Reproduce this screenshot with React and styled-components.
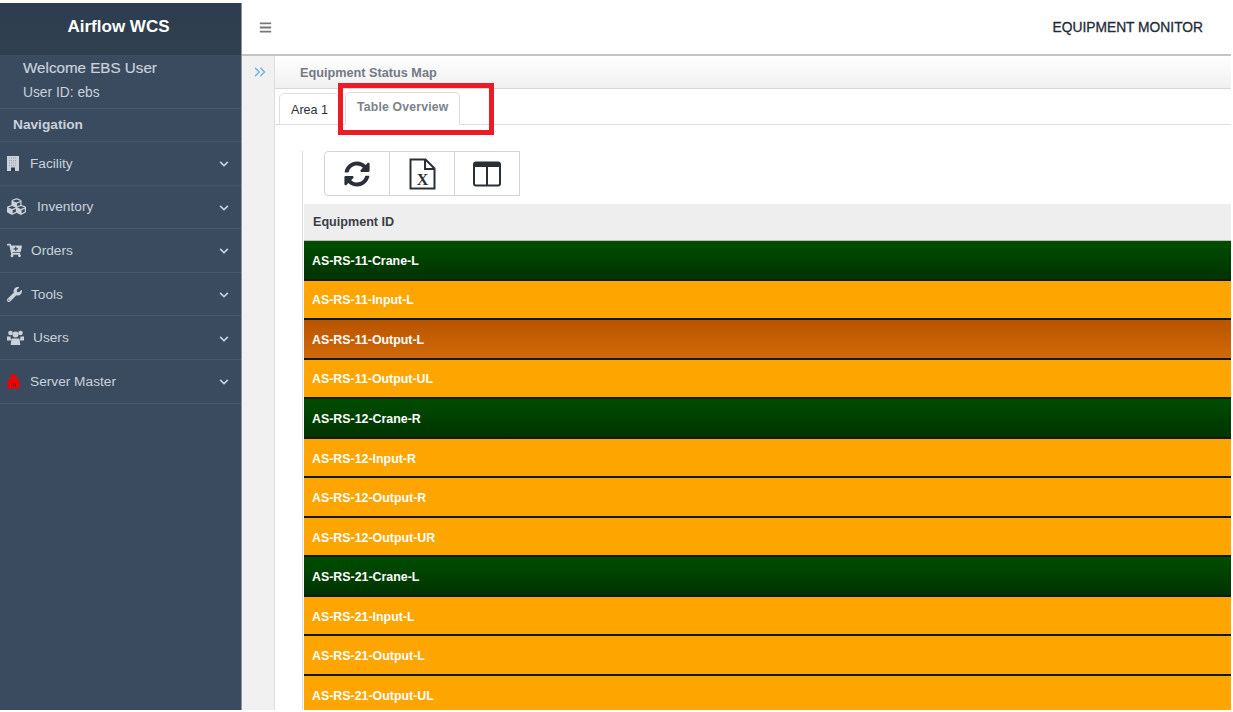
import React from 'react';
import styled, { createGlobalStyle } from 'styled-components';
import { FaBars, FaCartPlus, FaChevronDown, FaCubes, FaSyncAlt, FaWrench } from 'react-icons/fa';
import { ChevronsRight } from 'lucide-react';

const GlobalStyle = createGlobalStyle`
  html, body {
    margin: 0;
    height: 100%;
    background: #fff;
    overflow: hidden;
    font-family: "Liberation Sans", Arial, sans-serif;
  }
`;

const NAV_ITEMS = [
  { label: 'Facility', icon: <BuildingIcon />, gap: 11 },
  { label: 'Inventory', icon: <FaCubes size={19} />, gap: 11 },
  { label: 'Orders', icon: <FaCartPlus size={15} />, gap: 9 },
  { label: 'Tools', icon: <FaWrench size={15} />, gap: 9 },
  { label: 'Users', icon: <UsersIcon />, gap: 9 },
  { label: 'Server Master', icon: <LockIcon />, gap: 10 },
];

const ROWS = [
  ['AS-RS-11-Crane-L', 'run'],
  ['AS-RS-11-Input-L', 'idle'],
  ['AS-RS-11-Output-L', 'busy'],
  ['AS-RS-11-Output-UL', 'idle'],
  ['AS-RS-12-Crane-R', 'run'],
  ['AS-RS-12-Input-R', 'idle'],
  ['AS-RS-12-Output-R', 'idle'],
  ['AS-RS-12-Output-UR', 'idle'],
  ['AS-RS-21-Crane-L', 'run'],
  ['AS-RS-21-Input-L', 'idle'],
  ['AS-RS-21-Output-L', 'idle'],
  ['AS-RS-21-Output-UL', 'idle'],
];

const ROW_BG = {
  run: 'linear-gradient(#004d00, #003300)',
  idle: '#ffa500',
  busy: 'linear-gradient(#b85400, #d26a08)',
};

function BuildingIcon() {
  return (
    <svg width="12" height="15" viewBox="0 0 12 15">
      <rect width="12" height="15" fill="#c9d1da" />
      <path d="M2 2h8M2 4.500h8M2 7h8M2 9.500h8" stroke="#94a0b0" strokeWidth="1" strokeDasharray="1 1" />
      <rect x="4" y="11.500" width="4" height="3.500" fill="#2f3b4a" />
    </svg>
  );
}

function UsersIcon() {
  return (
    <svg width="17" height="15" viewBox="0 0 17 15" fill="#c9d1da">
      <circle cx="3.500" cy="3" r="2.300" />
      <circle cx="13.500" cy="3" r="2.300" />
      <circle cx="8.500" cy="4.500" r="3" />
      <path d="M0 6.500h3.500l.5 4H0zM17 6.500h-3.500l-.5 4h4z" />
      <path d="M4.500 8.500h8l.8 6.500H3.700z" />
    </svg>
  );
}

function LockIcon() {
  return (
    <svg width="13" height="15" viewBox="0 0 13 15" fill="#f00000">
      <path d="M4 .5h5l1.500 4.500h-8z" />
      <path d="M1.500 5.500h10l1 2.500v6.500H.5V8z" />
      <path d="M4 9.500h1v3H4zM6 9.500h1v3H6zM8 9.500h1v3H8z" fill="#8a1020" />
    </svg>
  );
}

function ExcelIcon() {
  return (
    <svg width="27" height="32" viewBox="0 0 27 32" fill="none" stroke="#2b3038" strokeWidth="2">
      <path d="M1.500 1.500h15l9 9v20h-24z" />
      <path d="M16 1.500v9.500h9.500" />
      <text x="13.500" y="26.500" textAnchor="middle" fontFamily="Liberation Serif, serif" fontSize="16" fontWeight="700" fill="#2b3038" stroke="none">X</text>
    </svg>
  );
}

function ColumnsIcon() {
  return (
    <svg width="28" height="26" viewBox="0 0 28 26" fill="none" stroke="#2b3038" strokeWidth="2">
      <rect x="1" y="1.500" width="26" height="23" rx="2" />
      <path d="M1 4h26" strokeWidth="4" />
      <path d="M14 3v21" />
    </svg>
  );
}

function NavRow({ label, icon, gap }) {
  return (
    <NavItem>
      <NavIcon $gap={gap}>{icon}</NavIcon>
      <NavLabel>{label}</NavLabel>
      <Chevron><FaChevronDown size={10} /></Chevron>
    </NavItem>
  );
}

export default function App() {
  return (
    <>
      <GlobalStyle />
      <Page>
        <Sidebar>
          <Brand>Airflow WCS</Brand>
          <UserBox>
            <Welcome>Welcome EBS User</Welcome>
            <UserId>User ID: ebs</UserId>
          </UserBox>
          <NavHeading>Navigation</NavHeading>
          {NAV_ITEMS.map((item) => (
            <NavRow key={item.label} {...item} />
          ))}
        </Sidebar>
        <Main>
          <TopBar>
            <MenuButton><FaBars size={13} /></MenuButton>
            <PageTitle>EQUIPMENT MONITOR</PageTitle>
          </TopBar>
          <Body>
            <Rail><ChevronsRight size={18} strokeWidth={2} /></Rail>
            <Content>
              <Breadcrumb>Equipment Status Map</Breadcrumb>
              <Tabs>
                <Tab>Area 1</Tab>
                <Tab $active>Table Overview</Tab>
                <Highlight />
              </Tabs>
              <Panel>
                <Toolbar>
                  <ToolButton><FaSyncAlt size={26} /></ToolButton>
                  <ToolButton><ExcelIcon /></ToolButton>
                  <ToolButton><ColumnsIcon /></ToolButton>
                </Toolbar>
                <TableHead>Equipment ID</TableHead>
                {ROWS.map(([name, state]) => (
                  <Row key={name} $state={state}>{name}</Row>
                ))}
              </Panel>
            </Content>
          </Body>
        </Main>
      </Page>
    </>
  );
}

const Page = styled.div`
  display: flex;
  width: 1231px;
  height: 707px;
  margin-top: 3px;
  overflow: hidden;
`;

const Sidebar = styled.aside`
  flex: 0 0 241px;
  background: #3a4b60;
  color: #c9d1da;
  border-right: 1px solid #8f959c;
`;

const Brand = styled.div`
  height: 52px;
  display: flex;
  align-items: center;
  justify-content: center;
  background: linear-gradient(#2c3d50, #30404f);
  color: #fff;
  font-size: 17px;
  font-weight: 700;
  padding: 0 4px 4px 0;
  box-sizing: border-box;
`;

const UserBox = styled.div`
  height: 54px;
  padding: 4px 0 0 23px;
  box-sizing: border-box;
  border-bottom: 1px solid #45566b;
`;

const Welcome = styled.div`
  font-size: 15.200px;
  line-height: 18px;
  -webkit-text-stroke: 0.2px #c9d1da;
`;

const UserId = styled.div`
  font-size: 13.800px;
  line-height: 16px;
  margin-top: 8px;
`;

const NavHeading = styled.div`
  height: 33px;
  padding-left: 13px;
  font-size: 13.700px;
  font-weight: 700;
  line-height: 32px;
  box-sizing: border-box;
  border-bottom: 1px solid #45566b;
`;

const NavItem = styled.div`
  height: 43.600px;
  display: flex;
  align-items: center;
  padding: 0 12px 0 7px;
  box-sizing: border-box;
  border-bottom: 1px solid #45566b;
`;

const NavIcon = styled.span`
  display: flex;
  align-items: center;
  margin-right: ${(p) => p.$gap}px;
`;

const NavLabel = styled.span`
  flex: 1;
  font-size: 13.700px;
`;

const Chevron = styled.span`
  display: flex;
  padding-top: 2px;
`;

const Main = styled.div`
  flex: 1;
  min-width: 0;
  display: flex;
  flex-direction: column;
`;

const TopBar = styled.header`
  flex: 0 0 53px;
  display: flex;
  align-items: center;
  justify-content: space-between;
  padding: 0 28px 2px 17px;
  box-sizing: border-box;
  border-bottom: 2px solid #c4c4c4;
`;

const MenuButton = styled.span`
  display: flex;
  color: #777;
`;

const PageTitle = styled.h1`
  margin: 0;
  font-size: 13.800px;
  font-weight: 400;
  color: #222c38;
  -webkit-text-stroke: 0.3px #222c38;
`;

const Body = styled.div`
  flex: 1;
  min-height: 0;
  display: flex;
`;

const Rail = styled.div`
  flex: 0 0 33px;
  background: #f1f1f1;
  border-right: 1px solid #ddd;
  color: #6cb2e8;
  display: flex;
  justify-content: center;
  align-items: flex-start;
  padding: 7px 0 0 4px;
  box-sizing: border-box;
`;

const Content = styled.div`
  flex: 1;
  min-width: 0;
`;

const Breadcrumb = styled.div`
  height: 33px;
  padding-left: 25px;
  line-height: 34px;
  font-size: 12.700px;
  font-weight: 700;
  color: #737a84;
  background: linear-gradient(#fff, #f0f0f0);
  border-bottom: 1px solid #d8d8d8;
  box-sizing: border-box;
`;

const Tabs = styled.div`
  position: relative;
  height: 36px;
  display: flex;
  align-items: flex-end;
  gap: 6px;
  padding-left: 4px;
  border-bottom: 1px solid #ddd;
  box-sizing: border-box;
`;

const Tab = styled.div`
  height: ${(p) => (p.$active ? 33 : 32)}px;
  padding: ${(p) => (p.$active ? '0 11px 4px 11px' : '1px 10px 0 11px')};
  margin-bottom: -1px;
  display: flex;
  align-items: center;
  box-sizing: border-box;
  font-size: ${(p) => (p.$active ? 12.200 : 12.600)}px;
  font-weight: ${(p) => (p.$active ? 700 : 400)};
  letter-spacing: ${(p) => (p.$active ? '0.2px' : '0')};
  color: ${(p) => (p.$active ? '#7b828c' : '#2d3138')};
  background: #fff;
  border: 1px solid #ddd;
  border-bottom: 1px solid ${(p) => (p.$active ? '#fff' : '#ddd')};
  border-radius: 5px 5px 0 0;
`;

const Highlight = styled.div`
  position: absolute;
  left: 63px;
  top: -6px;
  width: 156px;
  height: 52px;
  border: 5px solid #ed1c24;
  box-sizing: border-box;
  pointer-events: none;
`;

const Panel = styled.section`
  margin: 26px 0 0 27px;
  padding-left: 1px;
  border-left: 1px solid #ddd;
`;

const Toolbar = styled.div`
  display: flex;
  width: 196px;
  height: 45px;
  margin-left: 20px;
  margin-bottom: 8px;
`;

const ToolButton = styled.div`
  flex: 1;
  display: flex;
  align-items: center;
  justify-content: center;
  color: #2b3038;
  background: #fff;
  box-sizing: border-box;
  border: 1px solid #d4d4d4;
  & + & {
    border-left: none;
  }
  &:first-child {
    border-radius: 4px 0 0 4px;
  }
`;

const TableHead = styled.div`
  height: 37px;
  padding-left: 9px;
  line-height: 36px;
  font-size: 12.600px;
  font-weight: 700;
  color: #3a3f47;
  background: #eee;
  border-bottom: 1px solid #bbb;
  box-sizing: border-box;
`;

const Row = styled.div`
  height: 39.550px;
  padding: 2px 0 0 8px;
  display: flex;
  align-items: center;
  box-sizing: border-box;
  font-size: 12.400px;
  font-weight: 700;
  color: #fff;
  background: ${(p) => ROW_BG[p.$state]};
  border-bottom: 2px solid #0c1c06;
`;
